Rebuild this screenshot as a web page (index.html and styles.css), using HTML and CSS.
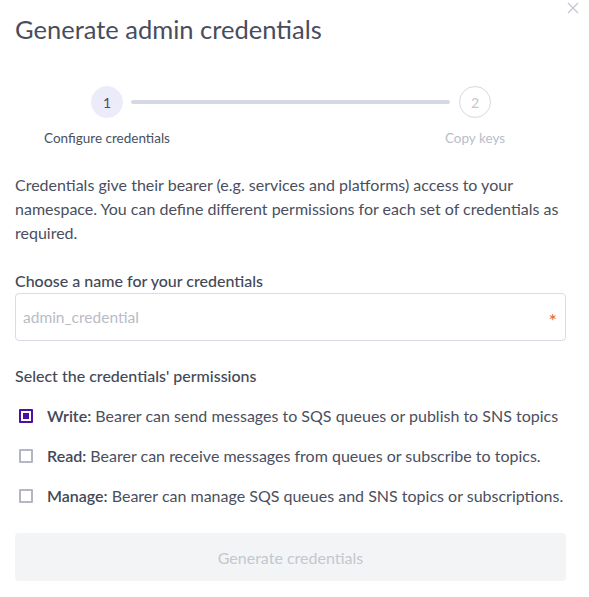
FILE: index.html
```html
<!DOCTYPE html>
<html>
<head>
<meta charset="utf-8">
<link rel="stylesheet" href="styles.css">
</head>
<body>
<div class="modal">
  <button class="close" aria-label="Close">
    <svg width="12" height="12" viewBox="0 0 12 12"><path d="M1 1L11 11M11 1L1 11" stroke="#c3c7d0" stroke-width="1.3" fill="none"/></svg>
  </button>
  <h1 class="title">Generate admin credentials</h1>

  <div class="stepper">
    <div class="step">
      <div class="circle active">1</div>
      <div class="step-label">Configure credentials</div>
    </div>
    <div class="bar"></div>
    <div class="step">
      <div class="circle">2</div>
      <div class="step-label muted">Copy keys</div>
    </div>
  </div>

  <p class="intro">Credentials give their bearer (e.g. services and platforms) access to your namespace. You can define different permissions for each set of credentials as required.</p>

  <label class="field-label">Choose a name for your credentials</label>
  <div class="input">
    <span class="placeholder">admin_credential</span>
    <span class="req">*</span>
  </div>

  <div class="field-label perms">Select the credentials' permissions</div>
  <div class="options">
    <div class="option"><span class="box checked"></span><span><b>Write:</b> Bearer can send messages to SQS queues or publish to SNS topics</span></div>
    <div class="option"><span class="box"></span><span><b>Read:</b> Bearer can receive messages from queues or subscribe to topics.</span></div>
    <div class="option"><span class="box"></span><span><b>Manage:</b> Bearer can manage SQS queues and SNS topics or subscriptions.</span></div>
  </div>

  <div class="btn">Generate credentials</div>
</div>
</body>
</html>
```
FILE: styles.css
```css
* { box-sizing: border-box; }
html, body { margin: 0; padding: 0; background: #fff; }
body { font-family: "Lato", sans-serif; color: #4a4f5e; }
.modal { position: relative; padding: 14px 23px 0 15px; width: 589px; }
.close { position: absolute; top: 2px; right: 10px; background: none; border: 0; padding: 0; width: 12px; height: 12px; }
.title { margin: 0; font-size: 25.5px; font-weight: 400; line-height: 30px; color: #484d5c; }
.stepper { display: flex; align-items: flex-start; margin-top: 42px; padding: 0 25px 0 26px; }
.step { display: flex; flex-direction: column; align-items: center; width: 132px; flex: none; }
.circle { width: 32px; height: 32px; border-radius: 50%; display: flex; align-items: center; justify-content: center; font-size: 14px; color: #c2c6d0; border: 1px solid #d5d9e3; background: #fff; }
.circle.active { background: #ecebfa; border-color: #ecebfa; color: #4a4f5e; }
.bar { flex: 1; height: 4px; border-radius: 2px; background: #d4d9e3; margin: 14px -41px 0 -42px; }
.step-label { margin-top: 12px; font-size: 13.5px; color: #4a4f5e; white-space: nowrap; }
.step-label.muted { color: #b9bdc8; }
.intro { margin: 27px 0 0; font-size: 16px; line-height: 24px; }
.field-label { display: block; margin-top: 25px; font-size: 16px; font-weight: 500; line-height: 22px; color: #434857; }
.input { margin-top: 1px; height: 48px; border: 1px solid #d8dce6; border-radius: 4px; display: flex; align-items: center; justify-content: space-between; padding: 0 8px 0 7px; }
.placeholder { color: #b9bcc7; font-size: 15.5px; }
.req { color: #e0683a; font-size: 20px; line-height: 1; padding-top: 6px; }
.perms { margin-top: 24px; }
.options { margin-top: 18px; display: flex; flex-direction: column; gap: 18px; padding-left: 4px; }
.option { display: flex; align-items: center; gap: 14px; font-size: 16px; height: 22px; line-height: 22px; white-space: nowrap; }
.option b { font-weight: 600; color: #434857; }
.box { width: 14px; height: 14px; border: 2px solid #b3b7c3; border-radius: 1px; flex: none; }
.box.checked { border-color: #4b109f; background: #4b109f; box-shadow: inset 0 0 0 2px #fff; }
.btn { margin-top: 26px; height: 48px; border-radius: 4px; background: #f3f4f6; color: #c4c7cf; font-size: 16px; display: flex; align-items: center; justify-content: center; }
```
